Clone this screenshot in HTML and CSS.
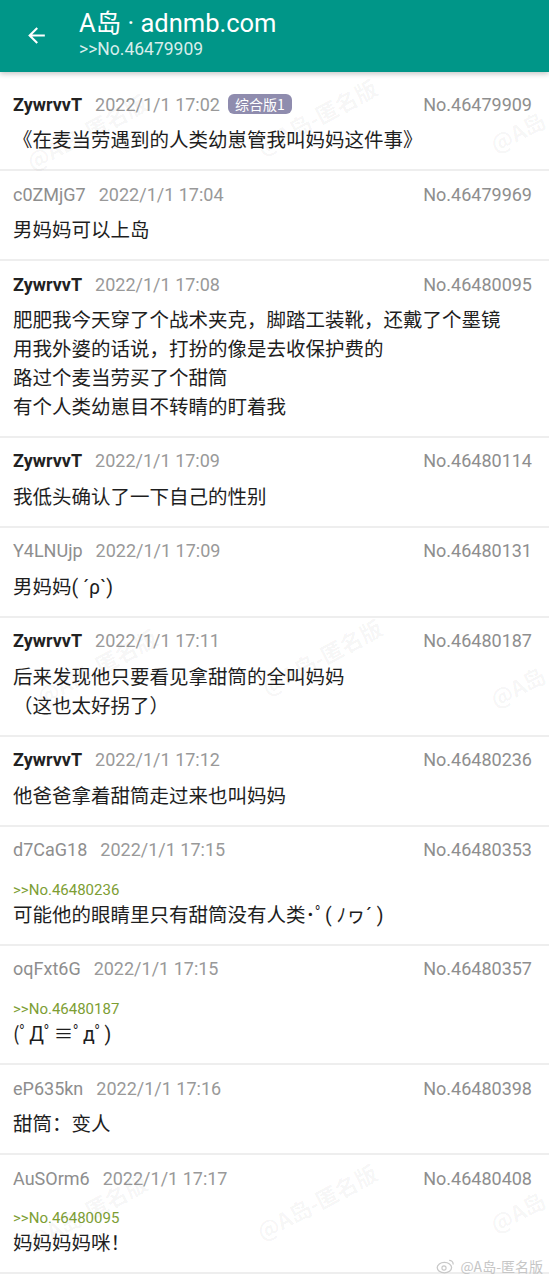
FILE: index.html
```html
<!DOCTYPE html>
<html lang="zh-CN">
<head>
<meta charset="utf-8">
<title>A岛 · adnmb.com</title>
<link rel="stylesheet" href="styles.css">
</head>
<body>
<header class="toolbar">
  <svg class="back" viewBox="0 0 24 24" width="24" height="24"><path d="M20 11H7.83l5.59-5.59L12 4l-8 8 8 8 1.41-1.41L7.83 13H20v-2z" fill="#fff"/></svg>
  <div class="titles">
    <div class="title">A岛 · adnmb.com</div>
    <div class="subtitle">&gt;&gt;No.46479909</div>
  </div>
</header>
<main class="list">
  <article class="post">
    <div class="meta"><span class="uid po">ZywrvvT</span><span class="time">2022/1/1 17:02</span><span class="badge">综合版1</span><span class="no">No.46479909</span></div>
    <div class="body">《在麦当劳遇到的人类幼崽管我叫妈妈这件事》</div>
  </article>
  <article class="post">
    <div class="meta"><span class="uid">c0ZMjG7</span><span class="time">2022/1/1 17:04</span><span class="no">No.46479969</span></div>
    <div class="body">男妈妈可以上岛</div>
  </article>
  <article class="post">
    <div class="meta"><span class="uid po">ZywrvvT</span><span class="time">2022/1/1 17:08</span><span class="no">No.46480095</span></div>
    <div class="body">肥肥我今天穿了个战术夹克，脚踏工装靴，还戴了个墨镜<br>用我外婆的话说，打扮的像是去收保护费的<br>路过个麦当劳买了个甜筒<br>有个人类幼崽目不转睛的盯着我</div>
  </article>
  <article class="post">
    <div class="meta"><span class="uid po">ZywrvvT</span><span class="time">2022/1/1 17:09</span><span class="no">No.46480114</span></div>
    <div class="body">我低头确认了一下自己的性别</div>
  </article>
  <article class="post">
    <div class="meta"><span class="uid">Y4LNUjp</span><span class="time">2022/1/1 17:09</span><span class="no">No.46480131</span></div>
    <div class="body">男妈妈( ´ρ`)</div>
  </article>
  <article class="post">
    <div class="meta"><span class="uid po">ZywrvvT</span><span class="time">2022/1/1 17:11</span><span class="no">No.46480187</span></div>
    <div class="body">后来发现他只要看见拿甜筒的全叫妈妈<br>（这也太好拐了）</div>
  </article>
  <article class="post">
    <div class="meta"><span class="uid po">ZywrvvT</span><span class="time">2022/1/1 17:12</span><span class="no">No.46480236</span></div>
    <div class="body">他爸爸拿着甜筒走过来也叫妈妈</div>
  </article>
  <article class="post">
    <div class="meta"><span class="uid">d7CaG18</span><span class="time">2022/1/1 17:15</span><span class="no">No.46480353</span></div>
    <div class="quote">&gt;&gt;No.46480236</div>
    <div class="body after-quote">可能他的眼睛里只有甜筒没有人类･ﾟ( ﾉヮ´ )</div>
  </article>
  <article class="post">
    <div class="meta"><span class="uid">oqFxt6G</span><span class="time">2022/1/1 17:15</span><span class="no">No.46480357</span></div>
    <div class="quote">&gt;&gt;No.46480187</div>
    <div class="body after-quote">(ﾟДﾟ≡ﾟдﾟ)</div>
  </article>
  <article class="post">
    <div class="meta"><span class="uid">eP635kn</span><span class="time">2022/1/1 17:16</span><span class="no">No.46480398</span></div>
    <div class="body">甜筒：变人</div>
  </article>
  <article class="post">
    <div class="meta"><span class="uid">AuSOrm6</span><span class="time">2022/1/1 17:17</span><span class="no">No.46480408</span></div>
    <div class="quote">&gt;&gt;No.46480095</div>
    <div class="body after-quote">妈妈妈妈咪！</div>
  </article>
</main>
<div class="wm wm1">@A岛-匿名版</div>
<div class="wm wm2">@A岛-匿名版</div>
<div class="wm wm3">@A岛</div>
<div class="wm wm4">@A岛-匿名版</div>
<div class="wm wm5">@A岛-匿名版</div>
<div class="wm wm6">@A岛</div>
<div class="wm wm7">@A岛-匿名版</div>
<div class="wm wm8">@A岛-匿名版</div>
<div class="wm wm9">@A岛</div>
<div class="weibo">
  <svg viewBox="0 0 24 20" width="20" height="16"><ellipse cx="10" cy="12" rx="9" ry="6.5" fill="none" stroke="#c8c8c8" stroke-width="1.6"/><circle cx="9.5" cy="12.5" r="2.6" fill="none" stroke="#c8c8c8" stroke-width="1.4"/><path d="M16 3a5 5 0 0 1 5 5" fill="none" stroke="#c8c8c8" stroke-width="1.6"/></svg>
  <span>@A岛-匿名版</span>
</div>
</body>
</html>
```
FILE: styles.css
```css
* { box-sizing: border-box; }
html, body { margin: 0; padding: 0; background: #fff; }
body {
  width: 549px;
  height: 1280px;
  overflow: hidden;
  position: relative;
  font-family: Roboto, "Noto Sans CJK SC", "Noto Sans", sans-serif;
  color: #222;
}
.toolbar {
  height: 72px;
  background: #009688;
  display: flex;
  align-items: center;
  padding-left: 24px;
  box-shadow: 0 2px 5px rgba(0,0,0,0.22);
  position: relative;
  z-index: 2;
}
.back { width: 25px; height: 25px; margin-right: 30px; margin-top: -2px; }
.titles { display: flex; flex-direction: column; color: #fff; margin-top: -6px; }
.title { font-size: 25.5px; line-height: 31px; font-family: Roboto, "Noto Sans CJK SC", sans-serif; }
.subtitle { font-size: 17.5px; line-height: 20px; color: rgba(255,255,255,0.85); }
.list { padding-top: 9px; }
.post {
  padding: 12px 17px 13.3px 13px;
  border-bottom: 2px solid #eeeeee;
}
.meta {
  display: flex;
  align-items: center;
  height: 22px;
  font-size: 18px;
  color: #8e8e8e;
}
.uid { margin-right: 13px; }
.uid.po { font-weight: bold; color: #222; }
.time { color: #999; }
.badge {
  margin-left: 8px;
  background: #8f8cae;
  color: #fff;
  font-size: 14px;
  line-height: 20px;
  padding: 0 7px;
  border-radius: 6px;
  font-family: "Noto Sans CJK SC", sans-serif;
}
.no { margin-left: auto; color: #8e8e8e; }
.body {
  margin-top: 12px;
  font-size: 19.5px;
  line-height: 28.8px;
  font-family: Roboto, "Noto Sans CJK SC", sans-serif;
  color: #1e1e1e;
}
.quote {
  margin-top: 19px;
  font-size: 15px;
  line-height: 20px;
  color: #7d9e34;
}
.body.after-quote { margin-top: 2px; }
.wm {
  position: absolute;
  font-family: "Noto Sans CJK SC", sans-serif;
  font-size: 22px;
  font-weight: bold;
  color: rgba(0,0,0,0.045);
  transform: rotate(-28deg);
  white-space: nowrap;
  pointer-events: none;
  z-index: 1;
}
.wm1 { left: 20px; top: 115px; }
.wm2 { left: 250px; top: 100px; }
.wm3 { left: 488px; top: 115px; }
.wm4 { left: 30px; top: 650px; }
.wm5 { left: 255px; top: 640px; }
.wm6 { left: 488px; top: 670px; }
.wm7 { left: 20px; top: 1195px; }
.wm8 { left: 250px; top: 1185px; }
.wm9 { left: 488px; top: 1195px; }
.weibo {
  position: absolute;
  right: 6px;
  top: 1256px;
  display: flex;
  align-items: center;
  gap: 4px;
  font-family: "Noto Sans CJK SC", sans-serif;
  font-size: 14px;
  color: #c6c6c6;
  z-index: 1;
}
```
